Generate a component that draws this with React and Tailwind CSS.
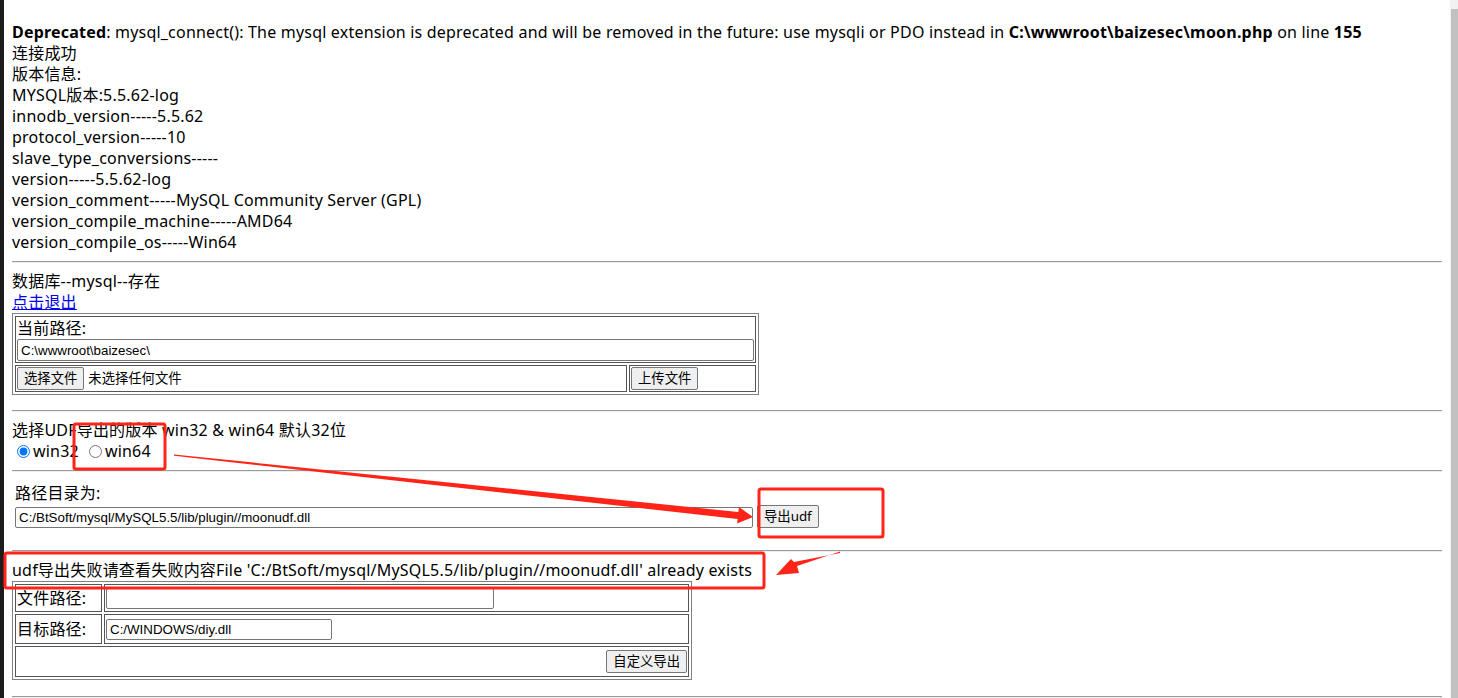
import React from 'react';

const font = { fontFamily: '"Noto Sans", "Noto Sans CJK SC", sans-serif' };

function Hr({ className = '' }) {
  return <div className={`h-[2px] border-t border-[#9a9a9a] border-b border-b-[#eeeeee] ${className}`} />;
}

function Btn({ children, className = '' }) {
  return (
    <span className={`inline-flex items-center justify-center rounded-[2px] border border-[#767676] bg-[#efefef] px-[6px] text-[13.33px] leading-none tracking-normal text-black ${className}`}>
      {children}
    </span>
  );
}

function Field({ value, className = '' }) {
  return (
    <div className={`flex h-[21px] items-center rounded-[2px] border border-[#767676] bg-white px-[3px] text-[13.33px] tracking-normal ${className}`}
      style={{ fontFamily: '"Liberation Sans", Arial, sans-serif' }}>
      {value}
    </div>
  );
}

// red annotations drawn on top of the page
function Marks() {
  return (
    <svg className="pointer-events-none absolute left-0 top-0" width="1458" height="698">
      <g fill="none" stroke="#ff2418" strokeWidth="3">
        <rect x="74" y="424" width="91" height="45" rx="2" />
        <rect x="759" y="489" width="124" height="48" rx="2" />
        <rect x="5" y="553" width="759" height="35" rx="2" />
      </g>
      <polygon fill="#ff2418"
        points="174,454.5 738.3,512 739,507 753,517 737,523.5 737.7,519 174,455.8" />
      <polygon fill="#ff2418"
        points="840,551.5 797,566 799,573 776,575 791,559 794,562 840,553" />
    </svg>
  );
}

export default function App() {
  const info = [
    '连接成功',
    '版本信息:',
    'MYSQL版本:5.5.62-log',
    'innodb_version-----5.5.62',
    'protocol_version-----10',
    'slave_type_conversions-----',
    'version-----5.5.62-log',
    'version_comment-----MySQL Community Server (GPL)',
    'version_compile_machine-----AMD64',
    'version_compile_os-----Win64',
  ];

  return (
    <div className="relative flex h-[698px] w-[1458px] overflow-hidden bg-white text-[16px] leading-[21px] tracking-[0.2px] text-black" style={font}>
      <div className="w-[4px] shrink-0 bg-[#1c1c1c]" />

      <main className="flex-1 px-2 pt-[22px]">
        <div>
          <b>Deprecated</b>: mysql_connect(): The mysql extension is deprecated and will be removed in the future: use mysqli or PDO instead in <b>C:\wwwroot\baizesec\moon.php</b> on line <b>155</b>
        </div>
        {info.map(t => <div key={t}>{t}</div>)}

        <Hr className="my-2" />
        <div>数据库--mysql--存在</div>
        <div><a className="text-[#0000ee] underline">点击退出</a></div>

        <table className="w-[747px] border-separate border-spacing-[2px] border border-[#808080]">
          <tbody>
            <tr>
              <td colSpan={2} className="border border-[#555] p-[1px]">
                <div>当前路径:</div>
                <Field value="C:\wwwroot\baizesec\" className="h-[22px]" />
              </td>
            </tr>
            <tr>
              <td className="w-[612px] border border-[#555] p-[1px]">
                <div className="flex items-center gap-[4px] text-[13.33px] tracking-normal">
                  <Btn className="h-[23px]">选择文件</Btn>
                  <span>未选择任何文件</span>
                </div>
              </td>
              <td className="border border-[#555] p-[1px]">
                <Btn className="h-[23px]">上传文件</Btn>
              </td>
            </tr>
          </tbody>
        </table>

        <Hr className="mb-2 mt-[15px]" />
        <div>选择UDF导出的版本 win32 &amp; win64 默认32位</div>
        <div className="flex items-center pl-[5px]">
          <input type="radio" name="ver" defaultChecked className="m-0 h-[13px] w-[13px] accent-[#0075ff]" />
          <span className="ml-[3px]">win32</span>
          <input type="radio" name="ver" className="m-0 ml-[10px] h-[13px] w-[13px]" />
          <span className="ml-[3px]">win64</span>
        </div>

        <Hr className="my-2" />
        <div className="pl-[3px] pt-[3px]">
          <div>路径目录为:</div>
          <div className="mt-[2px] flex items-center gap-[4px]">
            <Field value="C:/BtSoft/mysql/MySQL5.5/lib/plugin//moonudf.dll" className="w-[738px]" />
            <Btn className="h-[23px] mt-[-1px]">导出udf</Btn>
          </div>
        </div>

        <Hr className="mb-2 mt-[22px]" />
        <div>udf导出失败请查看失败内容File 'C:/BtSoft/mysql/MySQL5.5/lib/plugin//moonudf.dll' already exists</div>

        <table className="w-[680px] border-separate border-spacing-[2px] border border-[#808080]">
          <tbody>
            <tr>
              <td className="h-[28px] w-[87px] border border-[#555] p-[1px]">文件路径:</td>
              <td className="border border-[#555] p-[1px]">
                <Field value="" className="w-[388px]" />
              </td>
            </tr>
            <tr>
              <td className="h-[30px] border border-[#555] p-[1px]">目标路径:</td>
              <td className="border border-[#555] p-[1px]">
                <Field value="C:/WINDOWS/diy.dll" className="w-[226px]" />
              </td>
            </tr>
            <tr>
              <td colSpan={2} className="h-[31px] border border-[#555] p-[1px] text-right">
                <Btn className="h-[23px]">自定义导出</Btn>
              </td>
            </tr>
          </tbody>
        </table>

        <Hr className="mt-4" />
      </main>

      <div className="flex w-[8px] shrink-0 flex-col bg-[#f1f1f1]">
        <div className="h-[9px]" />
        <div className="ml-[1px] flex-1 bg-[#c1c1c1]" />
      </div>

      <Marks />
    </div>
  );
}
